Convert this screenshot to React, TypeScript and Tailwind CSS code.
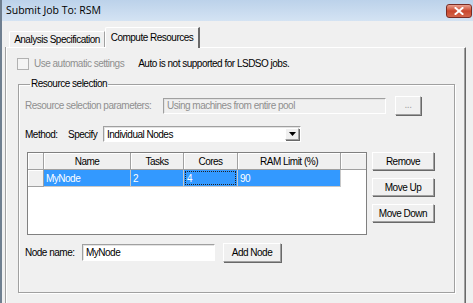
import React from "react";

const Button = ({ children, className = "", disabled = false }: { children: React.ReactNode; className?: string; disabled?: boolean }) => (
	<div
		className={`flex items-center justify-center bg-[#f0f0f0] border border-t-white border-l-white border-b-[#a0a0a0] border-r-[#a0a0a0] shadow-[1px_1px_0_#696969] ${disabled ? "text-[#a0a0a0]" : "text-black"} ${className}`}
	>
		{children}
	</div>
);

const Field = ({ children, className = "" }: { children?: React.ReactNode; className?: string }) => (
	<div className={`flex items-center border border-t-[#a0a0a0] border-l-[#a0a0a0] border-b-white border-r-white shadow-[inset_1px_1px_0_#e3e3e3] ${className}`}>
		{children}
	</div>
);

const HeaderCell = ({ children, className = "" }: { children?: React.ReactNode; className?: string }) => (
	<div className={`h-[17px] flex items-center justify-center bg-[#f0f0f0] border-r border-b border-[#a0a0a0] shadow-[inset_1px_1px_0_#fff] ${className}`}>
		{children}
	</div>
);

const Cell = ({ children, className = "" }: { children?: React.ReactNode; className?: string }) => (
	<div className={`h-[17px] flex items-center pl-[2px] bg-[#3399ff] text-white border-r border-b border-[#c8c8c8] ${className}`}>{children}</div>
);

export default function App() {
	return (
		<div className="w-[473px] h-[303px] overflow-hidden whitespace-nowrap bg-[#f0f0f0] font-['Liberation_Sans',Arial,sans-serif] text-[10px] tracking-[-0.5px] text-black flex flex-col border-l-2 border-[#6f7f90]">
			{/* Title bar */}
			<div className="h-[21px] shrink-0 flex items-center justify-between pl-[4px] pr-[1px] bg-gradient-to-b from-[#bcd2ea] to-[#d4e3f3]">
				<span className="font-['Open_Sans',sans-serif] text-[10.5px] tracking-normal text-black">Submit Job To: RSM</span>
				<div className="w-[26px] h-[14px] rounded-[3px] border border-[#7a2c24] bg-gradient-to-b from-[#e8a08f] via-[#c9462c] to-[#d3654a] flex items-center justify-center">
					<svg width="10" height="8" viewBox="0 0 10 8">
						<path d="M1.5 1 L8.5 7 M8.5 1 L1.5 7" stroke="#fff" strokeWidth="2" strokeLinecap="square" />
					</svg>
				</div>
			</div>

			{/* Tabs */}
			<div className="flex-1 flex flex-col pt-[6px] pl-[4px] pr-[7px]">
				<div className="h-[20px] shrink-0 flex items-end pl-[3px]">
					<div className="h-[16px] w-[96px] flex items-center justify-center border-t border-l border-white border-r border-r-[#a0a0a0] rounded-tl-[2px]">
						Analysis Specification
					</div>
					<div className="h-[21px] w-[95px] -mb-[1px] relative z-10 bg-[#f0f0f0] flex items-center justify-center pb-[2px] border-t border-l border-white border-r-2 border-r-[#696969] rounded-tl-[2px]">
						Compute Resources
					</div>
				</div>

				{/* Tab page */}
				<div className="flex-1 flex flex-col border-t border-l border-white border-r border-r-[#696969] shadow-[inset_-1px_0_0_#a0a0a0,-1px_0_0_#a0a0a0]">
					<div className="mt-[9px] ml-[10px] flex items-center h-[13px]">
						<div className="w-[12px] h-[12px] border border-[#b1b1b1] bg-[#f4f4f4]" />
						<span className="ml-[5px] text-[#8f8f8f]">Use automatic settings</span>
						<span className="ml-[14px]">Auto is not supported for LSDSO jobs.</span>
					</div>

					<fieldset className="mt-[8px] ml-[11px] w-[437px] border border-[#a0a0a0] shadow-[inset_1px_1px_0_#fff,1px_1px_0_#fff] px-[6px] pb-[30px]">
						<legend className="px-[1px] ml-[5px] leading-[12px]">Resource selection</legend>

						<div className="mt-[6px] flex items-center h-[19px]">
							<span className="w-[138px] text-[#8f8f8f]">Resource selection parameters:</span>
							<Field className="w-[223px] h-[16px] pl-[3px] text-[#8f8f8f]">Using machines from entire pool</Field>
							<Button disabled className="ml-[9px] w-[26px] h-[19px] pb-[3px]">...</Button>
						</div>

						<div className="mt-[11px] flex items-center h-[16px]">
							<span className="w-[43px]">Method:</span>
							<span className="w-[35px]">Specify</span>
							<Field className="w-[198px] h-[16px] bg-white pl-[3px] justify-between">
								<span>Individual Nodes</span>
								<Button className="w-[14px] h-[12px] mr-[1px]">
									<svg width="7" height="4" viewBox="0 0 7 4">
										<path d="M0 0 H7 L3.5 4 Z" fill="#000" />
									</svg>
								</Button>
							</Field>
						</div>

						<div className="mt-[10px] flex items-start">
							<div className="ml-[2px] w-[340px] h-[83px] bg-white border border-[#808080] flex flex-col">
								<div className="flex">
									<HeaderCell className="w-[16px]" />
									<HeaderCell className="w-[87px]">Name</HeaderCell>
									<HeaderCell className="w-[53px]">Tasks</HeaderCell>
									<HeaderCell className="w-[54px]">Cores</HeaderCell>
									<HeaderCell className="w-[103px]">RAM Limit (%)</HeaderCell>
									<HeaderCell className="flex-1 border-r-0" />
								</div>
								<div className="flex">
									<HeaderCell className="w-[16px]" />
									<Cell className="w-[87px]">MyNode</Cell>
									<Cell className="w-[53px]">2</Cell>
									<div className="w-[54px] h-[17px] bg-[#3399ff] border-r border-b border-[#c8c8c8] p-[1px]">
										<div className="h-full border border-dotted border-[#222] text-white flex items-center pl-[1px]">4</div>
									</div>
									<Cell className="w-[103px]">90</Cell>
								</div>
							</div>
							<div className="ml-[5px] flex flex-col gap-[8px]">
								<Button className="w-[62px] h-[18px]">Remove</Button>
								<Button className="w-[62px] h-[18px]">Move Up</Button>
								<Button className="w-[62px] h-[18px]">Move Down</Button>
							</div>
						</div>

						<div className="mt-[8px] flex items-center h-[19px]">
							<span className="w-[57px]">Node name:</span>
							<Field className="w-[133px] h-[17px] bg-white pl-[3px]">MyNode</Field>
							<Button className="ml-[8px] w-[58px] h-[19px]">Add Node</Button>
						</div>
					</fieldset>
				</div>
			</div>
		</div>
	);
}
